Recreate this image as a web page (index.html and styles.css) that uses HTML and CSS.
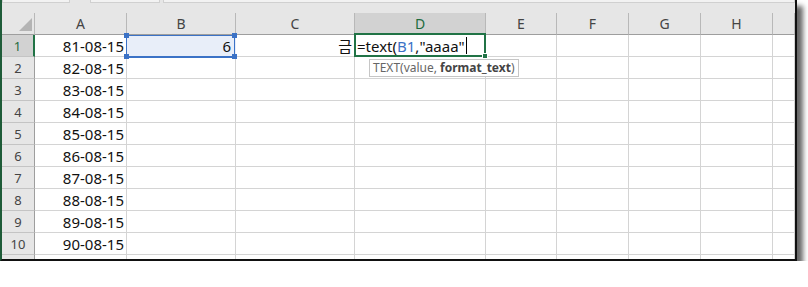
FILE: index.html
```html
<!DOCTYPE html>
<html lang="ko">
<head>
  <meta charset="UTF-8">
  <title>TEXT 함수</title>
  <link rel="stylesheet" href="styles.css">
</head>
<body>
  <div class="window">
    <div class="toolbar">
      <span class="box name-box"></span>
      <span class="box fx-box"></span>
      <span class="box bar-box"></span>
    </div>
    <div class="sheet" id="sheet"></div>
  </div>

  <script>
    const cols = ['A', 'B', 'C', 'D', 'E', 'F', 'G', 'H', ''];
    const sheet = document.getElementById('sheet');

    function cell(cls, html) {
      const el = document.createElement('div');
      el.className = cls;
      if (html) el.innerHTML = html;
      sheet.appendChild(el);
      return el;
    }

    // header row
    cell('corner', '<span class="tri"></span>');
    cols.forEach(c => cell('col-head' + (c === 'D' ? ' hl' : ''), c));

    for (let r = 1; r <= 11; r++) {
      cell('row-head' + (r === 1 ? ' hl' : ''), r <= 10 ? r : '');
      cols.forEach(c => {
        let cls = 'cell';
        let html = '';
        if (c === 'A' && r <= 10) {
          html = (80 + r) + '-08-15';
          cls += ' num';
        }
        if (r === 1 && c === 'B') {
          html = '6<i class="h tl"></i><i class="h tr"></i><i class="h bl"></i><i class="h br"></i>';
          cls += ' num ref';
        }
        if (r === 1 && c === 'C') {
          html = '금';
          cls += ' num';
        }
        if (r === 1 && c === 'D') {
          html = '<span class="entry">=text(<b class="ref-text">B1</b>,"aaaa"<i class="caret"></i></span>' +
                 '<i class="fill"></i>' +
                 '<span class="tip">TEXT(value, <b>format_text</b>)</span>';
          cls += ' active';
        }
        cell(cls, html);
      });
    }
  </script>
</body>
</html>
```

FILE: styles.css
```css
* {
  box-sizing: border-box;
}
html, body {
  margin: 0;
  padding: 0;
  background: #fff;
}
body {
  font-family: "Noto Sans", "Noto Sans CJK KR", sans-serif;
}

.window {
  width: 797px;
  height: 261px;
  background: #e6e6e6;
  border-left: 2px solid #1f5c39;
  border-right: 2px solid #111;
  border-bottom: 2px solid #111;
  box-shadow: 6px 6px 5px rgba(0, 0, 0, 0.6);
  overflow: hidden;
}

.toolbar {
  height: 13px;
  display: flex;
  gap: 20px;
}

.box {
  height: 3px;
  background: #f2f2f2;
  border: 1px solid #d0d0d0;
  border-top: none;
}
.name-box {
  width: 68px;
}
.fx-box {
  width: 70px;
  margin-right: -17px;
}
.bar-box {
  flex: 1;
}

.sheet {
  display: grid;
  grid-template-columns: 33px 92px 109px 119px 131px 71px 72px 72px 72px 1fr;
  grid-auto-rows: 22px;
  height: 246px;
  overflow: hidden;
  background: #fff;
}

.corner {
  position: relative;
  background: #e6e6e6;
  border-right: 1px solid #b8b8b8;
  border-bottom: 1px solid #9e9e9e;
}
.tri {
  position: absolute;
  right: 2px;
  bottom: 3px;
  width: 0;
  height: 0;
  border-left: 13px solid transparent;
  border-bottom: 13px solid #b4b4b4;
}

.col-head {
  background: #e6e6e6;
  border-right: 1px solid #b8b8b8;
  border-bottom: 1px solid #9e9e9e;
  display: flex;
  align-items: center;
  justify-content: center;
  font-size: 14px;
  color: #444;
}
.col-head.hl {
  background: #d2d2d2;
  color: #1e6b3e;
  border-bottom: 2px solid #217346;
}

.row-head {
  background: #e6e6e6;
  border-right: 1px solid #9e9e9e;
  border-bottom: 1px solid #c4c4c4;
  display: flex;
  align-items: center;
  justify-content: center;
  font-size: 13px;
  color: #444;
}
.row-head.hl {
  background: #d2d2d2;
  color: #1e6b3e;
  border-right: 2px solid #217346;
}

.cell {
  position: relative;
  border-right: 1px solid #d4d4d4;
  border-bottom: 1px solid #d4d4d4;
  display: flex;
  align-items: center;
  padding: 0 2px;
  font-size: 15px;
  color: #111;
  white-space: nowrap;
}
.cell.num {
  justify-content: flex-end;
}

/* formula reference B1 */
.cell.ref {
  z-index: 1;
  background: #e8eef9;
  border-right-color: transparent;
  box-shadow: inset 1px 1px 0 #3b72c6, inset -1px 0 0 #3b72c6;
  border-bottom: 2px solid #3b72c6;
  margin: 0 0 -1px -1px;
  padding-right: 4px;
}
.h {
  position: absolute;
  width: 5px;
  height: 5px;
  background: #3b72c6;
}
.h.tl { left: -2px; top: -2px; }
.h.tr { right: -2px; top: -2px; }
.h.bl { left: -2px; bottom: -3px; }
.h.br { right: -2px; bottom: -3px; }

/* active cell D1 */
.cell.active {
  z-index: 2;
  overflow: visible;
}
.cell.active::after {
  content: "";
  position: absolute;
  left: -1px;
  top: -2px;
  right: -1px;
  bottom: -1px;
  border: 2px solid #217346;
}
.entry {
  display: flex;
  align-items: center;
}
.ref-text {
  font-weight: normal;
  color: #3b72c6;
}
.caret {
  display: inline-block;
  width: 1px;
  height: 17px;
  margin-left: 1px;
  background: #000;
}
.fill {
  position: absolute;
  right: -3px;
  bottom: -3px;
  width: 6px;
  height: 6px;
  background: #217346;
  border: 1px solid #fff;
  z-index: 3;
}
.tip {
  position: absolute;
  left: 14px;
  top: 24px;
  height: 18px;
  padding: 0 3px;
  background: #fff;
  border: 1px solid #c6c6c6;
  font-size: 12px;
  line-height: 16px;
  color: #666;
}
.tip b {
  color: #444;
}
```
